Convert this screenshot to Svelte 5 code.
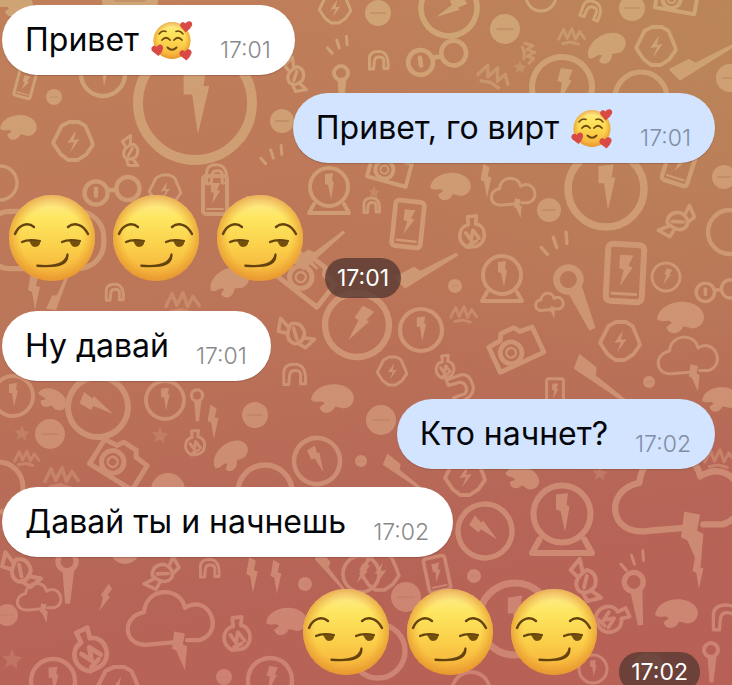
<script lang="ts">
  interface Message {
    id: number;
    side: 'in' | 'out';
    kind: 'plain' | 'smirks';
    text?: string;
    hearts?: boolean;
    time: string;
  }

  // [shape, x, y, size, rotation]; size is the radius or half-width
  type Doodle = [string, number, number, number, number?];

  const messages: Message[] = [
    { id: 1, side: 'in', kind: 'plain', text: 'Привет', hearts: true, time: '17:01' },
    { id: 2, side: 'out', kind: 'plain', text: 'Привет, го вирт', hearts: true, time: '17:01' },
    { id: 3, side: 'in', kind: 'smirks', time: '17:01' },
    { id: 4, side: 'in', kind: 'plain', text: 'Ну давай', time: '17:01' },
    { id: 5, side: 'out', kind: 'plain', text: 'Кто начнет?', time: '17:02' },
    { id: 6, side: 'in', kind: 'plain', text: 'Давай ты и начнешь', time: '17:02' },
    { id: 7, side: 'out', kind: 'smirks', time: '17:02' },
  ];

  const doodles: Doodle[] = [
    ['blob', 15, 4, 17], ['coin', 130, 0, 28], ['clock', 195, 103, 57], ['coin', 54, 97, 8],
    ['blob', 18, 127, 18], ['watch', 73, 141, 19], ['phone', 25, 84, 14, 15], ['clock', 103, 74, 22],
    ['candy', 130, 152, 14, 70], ['coin', 282, 121, 12], ['candy', 295, 76, 16, 60], ['wand', 341, 85, 20],
    ['flames', 338, 46, 13], ['watch', 335, 8, 15], ['arch', 217, 174, 13],
    ['flames', 272, 156, 14], ['based', 329, 187, 20],
    ['coin', 378, 13, 13], ['clock', 449, 8, 28, 60], ['coin', 505, 29, 15], ['glasses', 437, 57, 31, -8],
    ['arch', 379, 60, 12], ['squiggle', 572, 35, 14], ['squiggle', 495, 75, 17, 20], ['squiggle', 530, 53, 11, 80],
    ['clock', 562, 87, 30, 15], ['blob', 606, 48, 20, -25], ['coin', 632, 8, 13], ['watch', 656, 46, 19],
    ['ring', 641, 98, 26], ['brush', 700, 60, 35, -32], ['coin', 730, 78, 14], ['ring', 541, -4, 15],
    ['camera', 677, -3, 20, 10], ['arch', 592, 10, 12, 20],
    ['camera', 390, 168, 20, 15], ['blob', 450, 186, 20], ['bolt', 486, 180, 18], ['cloud', 514, 195, 22],
    ['coin', 549, 210, 12], ['clock', 606, 189, 38], ['phone', 408, 224, 24, 6], ['pear', 472, 232, 18],
    ['phone', 680, 163, 22, 18], ['coin', 724, 177, 12], ['candy', 678, 222, 18, -45], ['ring', 730, 232, 22],
    ['flames', 555, 245, 17], ['wand', 577, 298, 34, -25], ['based', 502, 275, 20], ['brush', 425, 268, 35, -32],
    ['phone', 625, 273, 30, 3], ['clock', 666, 277, 14, 25], ['glasses', 718, 290, 23], ['coin', 455, 286, 7],
    ['cloud', 550, 304, 14], ['clock', 421, 330, 21], ['clock', 357, 325, 32, 35], ['camera', 515, 347, 24, -25],
    ['watch', 620, 341, 19], ['blob', 680, 317, 23], ['cloud', 689, 360, 30], ['watch', 392, 371, 14],
    ['pear', 445, 367, 13], ['brush', 600, 378, 34, 34], ['coin', 649, 382, 6], ['blob', 720, 399, 18],
    ['phone', 555, 392, 14], ['arch', 462, 388, 16, 70], ['squiggle', 464, 313, 14], ['arch', 372, 205, 10],
    ['ring', 0, 183, 17], ['oval', 57, 240, 52], ['glasses', 112, 190, 29], ['watch', 165, 190, 15],
    ['phone', 215, 195, 20], ['brush', 318, 249, 31, -42], ['brush', 300, 249, 26, 40], ['camera', 308, 278, 25, 38],
    ['bolt', 34, 290, 20], ['brush', 58, 292, 22, -70], ['arch', 115, 292, 11], ['blob', 229, 282, 20, -20],
    ['squiggle', 183, 301, 18], ['candy', 295, 334, 18, 25], ['arch', 295, 374, 14], ['blob', 332, 398, 21],
    ['clock', 13, 396, 20], ['blob', 52, 399, 15, 30], ['clock', 98, 407, 30, -60], ['clock', 165, 400, 19],
    ['wand', 197, 405, 16], ['bolt', 213, 421, 18], ['coin', 255, 415, 13], ['coin', 50, 434, 15],
    ['camera', 120, 462, 25, 32], ['star', 160, 435, 10], ['pear', 195, 443, 14], ['blob', 230, 456, 19, -35],
    ['ring', 265, 492, 27], ['clock', 317, 461, 23, -25], ['coin', 361, 461, 6], ['ring', -2, 487, 25],
    ['squiggle', 62, 476, 18], ['star', 22, 433, 9], ['squiggle', 27, 457, 13], ['coin', 168, 490, 17],
    ['coin', 125, 549, 15], ['candy', 20, 571, 20, 30], ['wand', 67, 577, 26], ['candy', 163, 574, 18, -50],
    ['arch', 210, 568, 12], ['bolt', 252, 574, 19], ['bolt', 276, 576, 18], ['brush', 331, 570, 24, 48],
    ['clock', 361, 574, 18, 30], ['bolt', 105, 597, 15, 25], ['cloud', 40, 600, 22], ['cloud', 172, 625, 43],
    ['coin', 7, 615, 11], ['pear', 89, 650, 24, -20], ['clock', 53, 681, 22], ['coin', 305, 584, 7],
    ['watch', 118, 688, 21], ['pear', 237, 634, 19], ['blob', 286, 621, 20], ['clock', 270, 680, 22, 15],
    ['coin', 224, 677, 8], ['star', 12, 659, 12], ['coin', 381, 420, 15], ['watch', 465, 476, 19],
    ['brush', 403, 472, 26, 34], ['blob', 522, 478, 17, 20], ['clock', 485, 531, 27, -50], ['based', 562, 514, 30],
    ['cloud', 681, 502, 64], ['bolt', 698, 571, 18], ['watch', 380, 572, 18], ['phone', 437, 574, 18, -12],
    ['coin', 474, 576, 7], ['coin', 406, 597, 15], ['clock', 515, 619, 36], ['candy', 585, 582, 20, 55],
    ['flames', 633, 562, 15], ['wand', 636, 598, 27, -8], ['blob', 676, 613, 21], ['arch', 727, 617, 17],
    ['pear', 612, 618, 19, 70], ['clock', 593, 669, 14], ['wand', 711, 662, 20], ['ring', 378, 651, 27],
    ['ring', 471, 691, 19], ['blob', 648, 662, 14], ['star', 600, 473, 9], ['squiggle', 720, 457, 16],
    ['star', 341, 650, 9], ['star', 520, 67, 8], ['star', 374, 192, 7], ['star', 262, 20, 9],
  ];

  // Doodles turn from sand to pink on the way down
  function tint(y: number): string {
    const t = Math.min(1, Math.max(0, y / 685));
    const mix = (a: number, b: number) => Math.round(a + (b - a) * t);
    return `rgb(${mix(209, 208)}, ${mix(168, 134)}, ${mix(118, 118)})`;
  }

  function thickness(size: number): number {
    return Math.min(10, Math.max(3, size / 5));
  }
</script>

{#snippet smirk()}
  <svg class="smirk" viewBox="0 0 86 86" role="img" aria-label="😏">
    <circle cx="43" cy="43" r="43" fill="url(#face)" />
    <circle cx="43" cy="43" r="43" fill="url(#rim)" />
    <g fill="none" stroke="#64430f" stroke-linecap="round">
      <path d="M6 39C10 29 19 27 25 32" stroke-width="2.4" />
      <path d="M59 32C65 27 74 29 79 39" stroke-width="2.4" />
      <path d="M13 47C19 44 25 45 31 46" stroke-width="2.2" />
      <path d="M53 47C59 44 65 45 71 46" stroke-width="2.2" />
    </g>
    <path d="M20 46L31 46C32 49 29 52 26 52C23 52 22 49 20 46Z" fill="#74500f" />
    <path d="M60 46L71 46C72 49 69 52 66 52C63 52 62 49 60 46Z" fill="#74500f" />
    <path d="M28 69.5C44 71 56 69 57.5 59C58 57.5 60 58 59.5 61C59 71 49 73 28.5 72C27 72 27 69.5 28 69.5Z" fill="#64430f" />
  </svg>
{/snippet}

{#snippet loving()}
  <svg class="loving" viewBox="0 0 42 40" role="img" aria-label="🥰">
    <circle cx="21" cy="20.5" r="18.5" fill="url(#face)" />
    <circle cx="21" cy="20.5" r="18.5" fill="url(#rim)" />
    <g fill="none" stroke="#6b480f" stroke-width="1.5" stroke-linecap="round">
      <path d="M8 14Q11 10 15 11.5" />
      <path d="M25 11.5Q29 10 32 14" />
      <path d="M11 20Q15 15.5 19 20" stroke-width="1.8" />
      <path d="M23 20Q27 15.5 31 20" stroke-width="1.8" />
      <path d="M16.5 27.5Q21 32 25.5 27.5" stroke-width="2" />
    </g>
    <g fill="#d94a45">
      <path d="M34.5 12.5L29.5 6.5C28 3 32 .5 34.5 3.5C37 -.5 42.5 1.5 41 5.5Q39.5 9 34.5 12.5Z" />
      <path d="M7.5 36L1 31C-1 27 3 24 6 27C8 22.5 13 25 12 29Q11 33 7.5 36Z" />
      <path d="M35.5 40.5L29 35.5C27 31.5 31 28.5 34 31.5C36 27.5 41.5 29.5 40.5 33.5Q39 37.5 35.5 40.5Z" />
    </g>
  </svg>
{/snippet}

<main class="chat">
  <svg class="wallpaper" viewBox="0 0 732 685" preserveAspectRatio="xMidYMid slice" aria-hidden="true">
    <defs>
      <linearGradient id="face" x1="0" y1="0" x2="0" y2="1">
        <stop offset="0" stop-color="#fdeb9c" />
        <stop offset="0.25" stop-color="#fee762" />
        <stop offset="0.6" stop-color="#fbd04a" />
        <stop offset="1" stop-color="#f4ac38" />
      </linearGradient>
      <radialGradient id="rim">
        <stop offset="0.72" stop-color="#e8912c" stop-opacity="0" />
        <stop offset="1" stop-color="#df8929" stop-opacity="0.6" />
      </radialGradient>
    </defs>
    {#each doodles as [shape, x, y, size, turn = 0]}
      <g
        transform="translate({x} {y}) rotate({turn}) scale({size / 20})"
        fill="none"
        stroke={tint(y)}
        stroke-width={(thickness(size) * 20) / size}
        stroke-linejoin="round"
        stroke-linecap="round"
      >
        {#if shape === 'clock'}
          <circle r="20" />
          <path d="M-4 -12L4 -13L3 -6L5 -6L1 11L-1 -3L-4 -3Z" fill={tint(y)} stroke="none" />
        {:else if shape === 'ring'}
          <circle r="20" />
        {:else if shape === 'oval'}
          <rect x="-28" y="-11" width="46" height="22" rx="10" stroke-width="2" />
        {:else if shape === 'coin'}
          <circle r="20" fill={tint(y)} stroke="none" />
          <path d="M-10 0H10" stroke="#b9805d" stroke-width="3" opacity="0.5" />
        {:else if shape === 'watch'}
          <path d="M-12 -16L-4 -20H6L13 -16L19 -2L21 4L14 14L5 20H-5L-13 14L-21 2Z" />
          <path d="M3 -11L-6 2L1 1L-3 12L7 -2L1 -1Z" fill={tint(y)} stroke="none" />
        {:else if shape === 'based'}
          <circle r="19" />
          <path d="M-15 17L-20 26H20L15 17" />
          <path d="M-4 -13L4 -14L3 -6L5 -5L2 12L-1 -2L-4 -3Z" fill={tint(y)} stroke="none" />
        {:else if shape === 'phone'}
          <rect x="-12" y="-19" width="24" height="38" rx="3" />
          <path d="M-8 14H8" stroke-width="2" />
          <path d="M-4 -12L5 -12L2 -5L5 -4L-3 9L-1 -2L-4 -3Z" fill={tint(y)} stroke="none" />
        {:else if shape === 'camera'}
          <path d="M-20 -9L-9 -10L-6 -15H6L9 -10L20 -9V14H-20Z" />
          <circle cx="-5" cy="3" r="9" />
          <circle cx="-5" cy="3" r="4" stroke-width="2" />
        {:else if shape === 'cloud'}
          <path d="M2 8L-10 9C-23 11 -24 -4 -13 -6C-12 -18 4 -18 6 -8C17 -15 25 3 13 7L7 7" stroke-width={Math.max(2, 60 / size)} />
          <path d="M1 3L6 4L5 9L7 10L6 21L2 12L0 11Z" fill={tint(y)} stroke="none" />
        {:else if shape === 'blob'}
          <path d="M-20 2C-18 -14 8 -18 18 -7C24 0 20 9 11 10L3 8C0 15 -9 17 -12 9L-7 5C-11 1 -14 6 -20 2Z" fill={tint(y)} stroke="none" />
        {:else if shape === 'glasses'}
          <circle cx="-11" cy="2" r="8" stroke-width="3" />
          <circle cx="11" cy="-1" r="8" stroke-width="3" />
          <path d="M-3 0L3 0M-11 -1V4" stroke-width="3" />
        {:else if shape === 'wand'}
          <circle cy="-12" r="7" />
          <path d="M-3 -5L-1 20H2L5 -5Z" fill={tint(y)} stroke-width="1" />
        {:else if shape === 'brush'}
          <path d="M-18 -5L-5 -4L-3 0L20 2V4L-5 4L-16 4Z" fill={tint(y)} stroke="none" />
        {:else if shape === 'bolt'}
          <path d="M-3 -18L4 -14L2 -4L6 -3L1 20L-2 2L-6 0Z" fill={tint(y)} stroke="none" />
        {:else if shape === 'flames'}
          <path d="M-16 3L-9 11M-2 -9L2 3M13 -15L14 -2" />
        {:else if shape === 'candy'}
          <path d="M-9 -8Q0 -16 9 -6Q13 5 4 10Q-9 11 -9 -8Z" />
          <path d="M-10 -4L-22 -9L-18 5L-8 3M10 0L22 -4L17 9L7 8M-4 -5L4 4" />
        {:else if shape === 'pear'}
          <path d="M-5 -17L5 -18L4 -9C17 -7 17 13 4 16L-5 17C-18 10 -15 -6 -4 -8ZM-7 1L-1 9L1 -2L8 7M-3 14L5 10" />
        {:else if shape === 'arch'}
          <path d="M-16 15V-3Q-15 -15 1 -14Q17 -13 15 14H8V0Q7 -6 -2 -5Q-8 -4 -8 5L-9 15Z" />
        {:else if shape === 'squiggle'}
          <path d="M-19 6L-12 -8L-7 5L0 -9L5 6L11 -5L18 5M-13 12L-2 10L9 13" opacity="0.7" />
        {:else if shape === 'star'}
          <path d="M0 -18L5 -5L17 -3L8 6L9 17L-1 9L-12 15L-8 3L-17 -5L-4 -6Z" fill={tint(y)} stroke="none" opacity="0.5" />
        {/if}
      </g>
    {/each}
  </svg>

  <ol class="messages">
    {#each messages as message (message.id)}
      <li class="row {message.side} {message.kind}">
        {#if message.kind === 'smirks'}
          <div class="faces">
            {@render smirk()}
            {@render smirk()}
            {@render smirk()}
          </div>
          <time class="badge">{message.time}</time>
        {:else}
          <div class="bubble">
            <p class="text">{message.text}</p>
            {#if message.hearts}
              {@render loving()}
            {/if}
            <time class="time">{message.time}</time>
          </div>
        {/if}
      </li>
    {/each}
  </ol>
</main>

<style>
  :global(body) {
    margin: 0;
  }

  .chat {
    position: relative;
    height: 100vh;
    overflow: hidden;
    background:
      radial-gradient(circle at 100% 5%, rgba(184, 144, 88, 0.5), transparent 45%),
      linear-gradient(170deg, #c0805a 0%, #bb7458 45%, #b66557 75%, #b86056 100%);
    font-family: Inter, 'Noto Sans', sans-serif;
  }

  .wallpaper {
    position: absolute;
    inset: 0;
    width: 100%;
    height: 100%;
    opacity: 0.9;
  }

  .messages {
    position: relative;
    display: flex;
    flex-direction: column;
    list-style: none;
    margin: 0;
    padding: 5px 17px 0 2px;
  }

  .row {
    display: flex;
    margin-bottom: 18px;
  }

  .out {
    justify-content: flex-end;
  }

  .bubble {
    display: flex;
    align-items: center;
    box-sizing: border-box;
    height: 70px;
    padding: 0 24px 0 23px;
    border-radius: 35px;
    background: #fff;
    box-shadow: 0 1px 1px rgba(110, 60, 50, 0.35);
  }

  .out .bubble {
    background: #d2e4ff;
  }

  .text {
    margin: 0;
    color: #05060a;
    font-size: 32px;
    line-height: 40px;
    white-space: nowrap;
  }

  .loving {
    width: 42px;
    height: 40px;
    margin-left: 12px;
    overflow: visible;
  }

  .time {
    margin-left: 27px;
    padding-top: 20px;
    color: #88888b;
    font-size: 23px;
    font-weight: 300;
    line-height: 24px;
  }

  .out .time {
    color: #808da2;
  }

  .smirks {
    align-items: flex-end;
    gap: 22px;
    margin-top: 14px;
    margin-bottom: 13px;
    padding-left: 7px;
  }

  .smirks.out {
    padding-right: 15px;
  }

  .faces {
    display: flex;
    gap: 18px;
    margin-bottom: 17px;
  }

  .smirk {
    width: 86px;
    height: 86px;
  }

  .badge {
    padding: 0 12px;
    border-radius: 20px;
    background: rgba(88, 58, 50, 0.8);
    color: #fff;
    font-size: 23px;
    line-height: 40px;
  }
</style>
